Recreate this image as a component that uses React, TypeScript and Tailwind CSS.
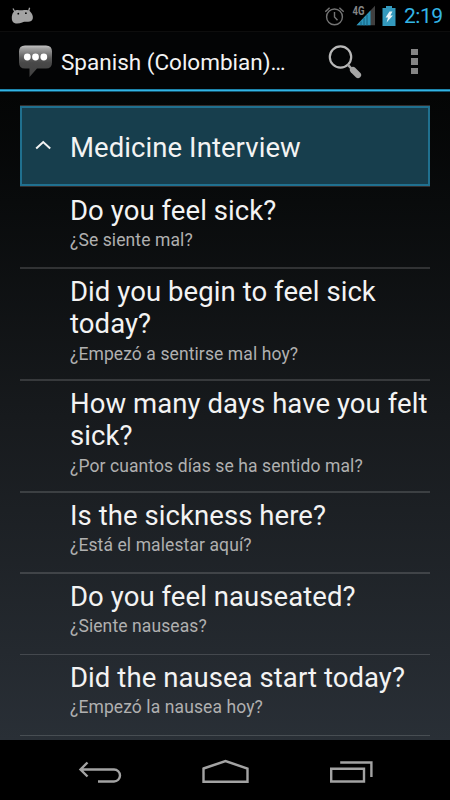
import React from "react";
import clsx from "clsx";

interface IPhrase {
  text: string;
  translation: string;
  rowClass: string;
}

const phrases: IPhrase[] = [
  { text: "Do you feel sick?", translation: "¿Se siente mal?", rowClass: "h-[82px] border-b-2 pt-[8.25px] gap-[1.25px]" },
  { text: "Did you begin to feel sick today?", translation: "¿Empezó a sentirse mal hoy?", rowClass: "h-[112px] border-b-2 pt-[7.25px] gap-[2.75px]" },
  { text: "How many days have you felt sick?", translation: "¿Por cuantos días se ha sentido mal?", rowClass: "h-[112px] border-b-2 pt-[7.25px] gap-[2.75px]" },
  { text: "Is the sickness here?", translation: "¿Está el malestar aquí?", rowClass: "h-[81px] border-b-2 pt-[7.25px] gap-[1.25px]" },
  { text: "Do you feel nauseated?", translation: "¿Siente nauseas?", rowClass: "h-[81px] border-b pt-[7.25px] gap-[1.25px]" },
  { text: "Did the nausea start today?", translation: "¿Empezó la nausea hoy?", rowClass: "h-[81px] border-b pt-[7.25px] gap-[1.25px]" },
];

const StatusBar: React.FC = () => (
  <div className="flex h-[31px] shrink-0 items-center bg-black pl-[11px] pr-[6px]">
    <svg width="23" height="18" viewBox="0 0 23 18" fill="#a3a3a3">
      <path d="M2 1.500 4.200 5.500M18.600.8 17.400 5" stroke="#a3a3a3" strokeWidth="1.300" />
      <path d="M.8 11C.8 7 2.500 3.200 6 2.900c2-.1 3.500.6 5.500.3 2.800-.5 5.600-.6 7.600 1.200 2.300 2 3.100 4.800 2.700 7-.5 2.300-2.400 3.200-4.600 3.300-2.500.1-4-.2-6 .7-2.500 1.100-5.500 1.700-7.800.7C1.500 15.300.8 13.300.8 11Z" />
      <circle cx="7.300" cy="6.700" r="0.900" fill="#000" />
      <circle cx="14.900" cy="6.200" r="0.900" fill="#000" />
    </svg>
    <svg className="ml-auto" width="20" height="20" viewBox="0 0 20 20" fill="none" stroke="#747474" strokeWidth="1.400">
      <circle cx="9.500" cy="10.900" r="7.900" />
      <path d="M9.500 6v5l3 3.300M.3 5.800 4.600 1.700M14.400 1.700l4.300 4.100" />
    </svg>
    <svg className="ml-[7px]" width="24" height="22" viewBox="0 0 24 22">
      <path d="M23 .8v19.500H4.500Z" fill="#404040" />
      <path d="M18.500 5.500V20.300h-14Z" fill="#2b95bb" />
      <path d="M9 16.500v4M12 13v8M15 10v11" stroke="#10526c" strokeWidth="0.800" />
      <text x="0.500" y="10" fontSize="12" fontWeight="700" fontFamily="Roboto, sans-serif" fill="#858585" textLength="12" lengthAdjust="spacingAndGlyphs">4G</text>
    </svg>
    <svg className="ml-[6px]" width="14" height="20" viewBox="0 0 14 20">
      <path d="M4 0h6v2h3.500v18H.5V2H4Z" fill="#3399bd" />
      <path d="M7.500 5.500h3L8.300 9.400h2.600L4.600 16.500 6 11.500H3.600Z" fill="#e9f4f8" />
    </svg>
    <div className="ml-[8px] w-[40px] whitespace-nowrap pt-[2px] text-[21px] leading-[31px] tracking-[-0.5px] text-[#33b5e5]">2:19</div>
  </div>
);

const ActionBar: React.FC = () => (
  <header className="shrink-0">
    <div className="flex h-[58px] items-center border-t border-[#0d0d0d] bg-[#030405] pl-[18px] pt-[2px]">
      <svg width="35" height="34" viewBox="0 0 35 34">
        <defs>
          <linearGradient id="bubble" x1="0" y1="0" x2="0" y2="1">
            <stop offset="0" stopColor="#c4c4c4" />
            <stop offset="0.100" stopColor="#a0a0a0" />
            <stop offset="0.400" stopColor="#5c5c5c" />
            <stop offset="0.550" stopColor="#484848" />
            <stop offset="1" stopColor="#414141" />
          </linearGradient>
        </defs>
        <path d="M7 .5h21q6 0 6 6v11q0 6-6 6h-9L11.500 32V23.500H7q-6 0-6-6V6.500Q1 .5 7 .5Z" fill="url(#bubble)" />
        <circle cx="9.300" cy="12" r="3.400" fill="#fff" />
        <circle cx="17.500" cy="12" r="3.400" fill="#fff" />
        <circle cx="25.800" cy="12" r="3.400" fill="#fff" />
      </svg>
      <h1 className="ml-[8px] w-[226px] whitespace-nowrap pt-[1px] text-[22.5px] leading-[54px] text-[#f3f3f3]">
        Spanish (Colombian)…
      </h1>
      <svg className="ml-[40px]" width="36" height="36" viewBox="0 0 36 36" fill="none">
        <circle cx="13.500" cy="13" r="10.700" stroke="#b8b8b8" strokeWidth="2.200" />
        <path d="m20.800 20.700 3.500 3.800" stroke="#a5a5a5" strokeWidth="2.500" />
        <path d="m26 26 5 5" stroke="#a5a5a5" strokeWidth="6.200" strokeLinecap="round" />
      </svg>
      <div className="ml-[48px] flex flex-col gap-[3px]">
        <div className="h-[6.5px] w-[7px] bg-[#858585]" />
        <div className="h-[6.5px] w-[7px] bg-[#858585]" />
        <div className="h-[6.5px] w-[7px] bg-[#858585]" />
      </div>
    </div>
    <div className="h-px bg-[#1d84ab]" />
    <div className="h-px bg-[#33b5e5]" />
    <div className="h-px bg-[#125570]" />
  </header>
);

const PhraseRow: React.FC<{ phrase: IPhrase }> = ({ phrase }) => (
  <li className={clsx("flex flex-col border-white/15 pl-[50px]", phrase.rowClass)}>
    <div className="text-[27.5px] leading-[32px] tracking-[0.07px] text-[#f3f3f3]">{phrase.text}</div>
    <div className="text-[17.5px] leading-[22px] tracking-[0.1px] text-[#b0b0b0]">{phrase.translation}</div>
  </li>
);

const NavBar: React.FC = () => (
  <div className="flex h-[60px] shrink-0 items-center justify-between bg-black pl-[78px] pr-[76px] pt-[3px]">
    <svg width="44" height="26" viewBox="0 0 44 26" fill="none" stroke="#a3a3a3" strokeWidth="2.400">
      <path d="M2 10.500h34a6 6 0 0 1 0 12H20M9.500 3.500 2.500 10.500l7 7" />
    </svg>
    <svg width="48" height="28" viewBox="0 0 48 28" fill="none" stroke="#a3a3a3" strokeWidth="2.400">
      <path d="M1.500 10.500 23.500 3l22 7.500v13.200h-44Z" />
    </svg>
    <svg width="44" height="26" viewBox="0 0 44 26" fill="none" stroke="#a3a3a3" strokeWidth="2.400">
      <path d="M1.200 9.700h32.800v12.800h-32.800ZM10.200 3.500h31.200v14.500" />
    </svg>
  </div>
);

const App: React.FC = () => {
  return (
    <div className="flex h-[800px] w-[450px] flex-col overflow-hidden bg-black font-[Roboto,sans-serif]">
      <StatusBar />
      <ActionBar />
      <main className="flex-1 overflow-hidden bg-linear-to-b from-[#040505] via-[#171a1d] via-50% to-[#292f36] px-[20px] pt-[13px]">
        <div className="border-y border-[#332d2d]">
          <div className="flex h-[80px] items-center border-[2.5px] border-[#20708f] bg-[#173e4d] pl-[13px]">
            <svg className="mb-[2px]" width="16" height="10" viewBox="0 0 16 10" fill="none" stroke="#f3f3f3" strokeWidth="2">
              <path d="m1.200 8.500 7-6.500 7 6.500" />
            </svg>
            <h2 className="ml-[19px] pt-[4px] text-[27.5px] leading-[32px] tracking-[0.07px] text-[#f3f3f3]">
              Medicine Interview
            </h2>
          </div>
        </div>
        <ul>
          {phrases.map((item) => (
            <PhraseRow key={item.text} phrase={item} />
          ))}
        </ul>
      </main>
      <NavBar />
    </div>
  );
};

export default App;
